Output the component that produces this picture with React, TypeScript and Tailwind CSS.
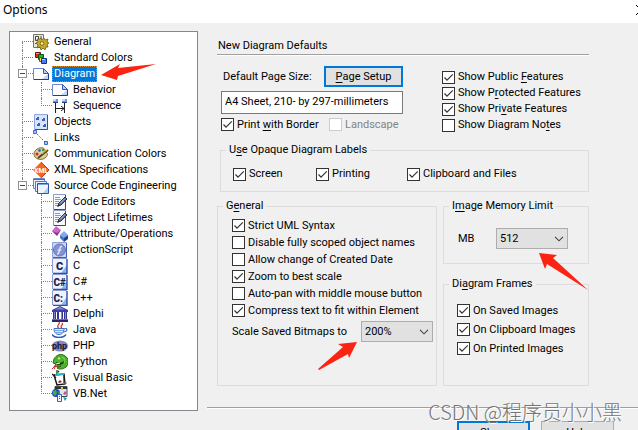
import React, { useId } from "react";

/* Renders a caption in which "&" marks the keyboard mnemonic. */
function Caption({ text }: { text: string }) {
  const at = text.indexOf("&");
  if (at < 0) return <>{text}</>;
  return (
    <>
      {text.slice(0, at)}
      <u className="underline decoration-1 underline-offset-2">{text[at + 1]}</u>
      {text.slice(at + 2)}
    </>
  );
}

type CheckProps = { label: string; checked?: boolean; disabled?: boolean; row?: string };

function Check({ label, checked, disabled, row = "h-4" }: CheckProps) {
  const id = useId();
  return (
    <div className={`flex items-center gap-[3px] ${row}`}>
      <span className="relative h-[13px] w-[13px] shrink-0">
        <input
          id={id}
          type="checkbox"
          defaultChecked={checked}
          disabled={disabled}
          className="peer block h-[13px] w-[13px] appearance-none border border-[#333] bg-white disabled:border-[#ccc]"
        />
        <svg
          viewBox="0 0 13 13"
          className="pointer-events-none absolute inset-0 hidden h-[13px] w-[13px] peer-checked:block"
        >
          <path d="M2.5 6.5 5 9.2 10.8 3.4" fill="none" stroke="#333" strokeWidth="1.2" />
        </svg>
      </span>
      <label htmlFor={id} className={`whitespace-nowrap ${disabled ? "text-[#838383]" : ""}`}>
        <Caption text={label} />
      </label>
    </div>
  );
}

function Group({ title, className, children }: { title: string; className: string; children: React.ReactNode }) {
  return (
    <fieldset className={`min-w-0 border border-[#dcdcdc] ${className}`}>
      <legend className="ml-[5px] h-[14px] px-[3px] leading-[14px]">
        <Caption text={title} />
      </legend>
      {children}
    </fieldset>
  );
}

function Dropdown({ id, value, options }: { id: string; value: string; options: string[] }) {
  return (
    <span className="relative h-[21px] w-[72px] shrink-0">
      <select
        id={id}
        defaultValue={value}
        className="block h-[21px] w-full appearance-none border border-[#adadad] bg-[#e1e1e1] pl-[3px]"
      >
        {options.map((o) => (
          <option key={o}>{o}</option>
        ))}
      </select>
      <svg viewBox="0 0 10 6" className="pointer-events-none absolute top-2 right-1 h-[6px] w-[10px]">
        <path d="M1 .8 5 4.8 9 .8" fill="none" stroke="#444" strokeWidth="1.1" />
      </svg>
    </span>
  );
}

/* ---- tree icons, 16 x 16 ---- */

const page = (
  <>
    <path d="M.5 2.5h10l5 5v6H.5z" fill="#fff" stroke="#7089d2" />
    <path d="M1 13.5h14.5V8" fill="none" stroke="#223a91" />
    <path d="M10.5 2.5v5h5z" fill="#bcd0fa" stroke="#3655b8" />
    <path d="M9 13h6V8z" fill="#c3d5fb" />
  </>
);

const editor = (
  <>
    <path d="M1.5.5h12v15h-12z" fill="#f7f9ff" stroke="#8b9ccc" />
    <path d="M13.5 1v14.5H2" fill="none" stroke="#32498f" />
    <path d="M3 3.5h5M3 5.5h6M3 7.5h4M3 9.5h4M3 11.5h3" stroke="#8c98b3" />
    <path d="m6 12 1-3 6-6 2 2-6 6z" fill="#566a8e" stroke="#111" strokeWidth=".8" />
    <path d="m8 9.5 5-5" stroke="#cfe0ff" strokeWidth=".8" />
    <path d="m5 13 2-1-1-1z" fill="#111" />
  </>
);

function langTile(mark: string) {
  return (
    <>
      <path d="M1 1h14v14H1z" fill="#eef3ff" />
      <path d="M9 15h6V7z" fill="#8fb4f3" />
      <path d="M.5 15V.5H15" fill="none" stroke="#8a9cd0" />
      <path d="M15 1v14.5H1" fill="none" stroke="#31519e" strokeWidth="1.4" />
      <text
        x={mark.length > 1 ? 1.5 : 4}
        y="12"
        fontSize={mark.length > 1 ? 10 : 11}
        fontWeight="900"
        fontFamily="Roboto, sans-serif"
        fill="#1b2350"
      >
        {mark}
      </text>
    </>
  );
}

const icons: Record<string, React.ReactNode> = {
  general: (
    <>
      <path d="M.5.5h10v13H.5z" fill="#e7e5da" stroke="#77766b" />
      <path d="M2.5 2.5h3v4h-3z" fill="#fff" stroke="#444" />
      <path d="M2 9.5h3M8 2v3" stroke="#55544a" />
      <path
        d="m8 4 1 2 2-2 1 2 3-1-1 3 2 1-2 1 1 3-2 0-1 3-2-2-2 2-1-3-3 1 1-3-2-2 2-1-1-3h3z"
        fill="#c6a82c"
        stroke="#6d5b10"
        strokeWidth=".8"
      />
      <circle cx="9" cy="9.5" r="1.8" fill="#fff6bb" stroke="#5b4a0b" strokeWidth=".8" />
    </>
  ),
  colors: (
    <>
      <path d="M2.5 2.5h5v5h-5z" fill="#e22a1c" stroke="#701008" />
      <path d="M5.5 4.5h5v5h-5z" fill="#25ad35" stroke="#0a5516" />
      <path d="M3 3h3v1H3z" fill="#ff927d" />
      <path d="M6.5 7.5h4v4h-4z" fill="#ffe032" stroke="#6b5900" />
      <path d="M8.5 8.5h5v5h-5z" fill="#4b7af0" stroke="#112f88" />
      <path d="M9 9h3v1H9z" fill="#b9d0ff" />
    </>
  ),
  page,
  sequence: (
    <>
      <path d="M1 1h5v4H1zM10 1h5v4h-5z" fill="#6d94e5" />
      <path d="M1 1h3v2H1zM10 1h3v2h-3z" fill="#c5d8ff" />
      <path d="M1 4.5h5M10 4.5h5" stroke="#22418c" />
      <path d="M3.5 5v10M12.5 5v10M4 10.5h8M9 8l3 2.5L9 13" fill="none" stroke="#222" />
    </>
  ),
  objects: (
    <>
      <path d="M1.5.5h13v15h-13z" fill="#d6e3ff" stroke="#90a7dc" />
      <path d="M14.5 1v14.5H2" fill="none" stroke="#2c4fa3" />
      <path d="M3 3h3v3H3zM9 4h3v3H9zM4 9h3v3H4zM10 10h3v3h-3z" fill="#3c60ba" />
      <path d="M3 3h1v1H3zM9 4h1v1H9zM4 9h1v1H4zM10 10h1v1h-1z" fill="#fff" />
    </>
  ),
  links: (
    <>
      <path d="M.5.5h3v3h-3zM11.5 11.5h3v3h-3z" fill="#a9c5ff" stroke="#4468bf" />
      <path d="m4 4 8 8" stroke="#333" strokeDasharray="1 1.5" />
    </>
  ),
  palette: (
    <>
      <path d="M1 8c0-4 5-7 9-6 3 1 1 3 3 4s2 4-1 6c-4 3-11 1-11-4z" fill="#dfcf93" stroke="#79683a" />
      <circle cx="4" cy="8" r="1.5" fill="#dc2518" />
      <circle cx="6.5" cy="4.5" r="1.3" fill="#2a54d1" />
      <circle cx="10" cy="4" r="1.2" fill="#25a538" />
      <circle cx="6" cy="11" r="1.3" fill="#f5f2e0" />
      <path d="m5 12 10-8" stroke="#50411f" strokeWidth="2" />
      <path d="m9 8 6-5" stroke="#efb62f" />
    </>
  ),
  xml: (
    <>
      <path d="m8 0 8 8-8 8-8-8z" fill="#f4661b" />
      <path d="m8 0 8 8-8 8" fill="none" stroke="#c83b08" />
      <text x="1" y="10.5" fontSize="7" fontWeight="700" fontFamily="Roboto, sans-serif" fill="#fff">
        XML
      </text>
    </>
  ),
  source: (
    <>
      <path d="M.5.5h11v10H.5z" fill="#e9f1ff" stroke="#6484ce" />
      <path d="M1 1h11v1H1z" fill="#4169c2" />
      <path d="M2.5 3.5h11v10h-11z" fill="#e9f1ff" stroke="#5277ca" />
      <path d="M4.5 5.5h11v10h-11z" fill="#eff5ff" stroke="#2f56ad" />
      <path d="M5 6h10v1H5z" fill="#7da3eb" />
      <path d="M10 15h5v-6z" fill="#b2cdfb" />
    </>
  ),
  editor,
  attributes: (
    <>
      <path d="m4 0 5 4-4 5-5-4z" fill="#cf65cf" />
      <path d="m0 5 5 2 4-3-4 6z" fill="#873487" />
      <path d="m12 5 4 4-4 4-4-4z" fill="#7daaf1" />
      <path d="M8 9l4 3v4l-4-4z" fill="#496fb7" />
      <path d="m12 12 4-3v4l-4 3z" fill="#243f82" />
    </>
  ),
  action: (
    <>
      <path d="M.5.5h14v15H.5z" fill="#c9d5f6" stroke="#8ea1d8" />
      <path d="M14.5 1v14.5H1" fill="none" stroke="#4461b4" />
      <circle cx="7.5" cy="8" r="6" fill="#8493d2" stroke="#6577bd" />
      <path d="M10 4.5c-2-.5-2 2-2.5 4S6.5 12 5 12M5.5 8h4" fill="none" stroke="#eef2ff" strokeWidth="1.2" />
    </>
  ),
  c: langTile("C"),
  csharp: langTile("C#"),
  cpp: langTile("C:"),
  delphi: (
    <>
      <path d="m8 0 8 4v2H0V4z" fill="#3d3fa6" />
      <path d="m8 1 5 2.5H3z" fill="#8286dc" />
      <path d="M1 6h3v7H1zM5 6h2v7H5zM9 6h2v7H9zM12 6h3v7h-3z" fill="#34368f" />
      <path d="M2 6h1v7H2zM9 6h1v7H9zM13 6h1v7h-1z" fill="#8185d5" />
      <path d="M0 13h16v3H0z" fill="#25266c" />
      <path d="M0 13.5h16" stroke="#656abf" />
    </>
  ),
  java: (
    <>
      <path d="M7 6C3 4 9 2 7 0M10 6c-3-2 2-3 0-5" fill="none" stroke="#e63522" strokeWidth="1.3" />
      <path d="M2 6.5h10c0 4-2 6-5 6s-5-2-5-6z" fill="#dbe9ff" stroke="#3c72c4" />
      <path d="M12 7c4-2 4 3-1 3" fill="none" stroke="#3c72c4" strokeWidth="1.2" />
      <path d="M3 8.5h8M4 10.5h6" stroke="#77a4e3" />
      <path d="M0 12.5c3 4 11 4 14 0" fill="none" stroke="#245fae" strokeWidth="1.5" />
    </>
  ),
  php: (
    <>
      <ellipse cx="8" cy="8" rx="8" ry="5.5" fill="#8587bd" />
      <text x="0" y="10.5" fontSize="9" fontWeight="700" fontFamily="Roboto, sans-serif" fill="#191933">
        php
      </text>
    </>
  ),
  python: (
    <>
      <path d="M2 5c2-4 7-6 11-3 4 2 4 8 1 11-3 2-6 3-9 1l4-2-7 1 2-3-3-1z" fill="#4cb32c" stroke="#286717" />
      <path d="M4 8c4 2 7 0 9-2-1 5-5 5-9 5z" fill="#173a0e" />
      <path d="m4 10 4-1" stroke="#fff" />
      <circle cx="7" cy="4.5" r="1" fill="#fffa98" />
      <path d="m0 15 2-2 4-1M1 13l2 2" fill="none" stroke="#e02a1a" />
      <path d="M10 3c3 1 3 4 2 6" fill="none" stroke="#8de35b" />
    </>
  ),
  vb: (
    <>
      <path d="m2 5 10-1 1 10-8 1z" fill="#fff" stroke="#111" strokeWidth="1.4" />
      <path d="m3 5 9-1" stroke="#20bcc5" strokeWidth="2" />
      <path d="m0 4 4 4M5 0v3l2-2M12 5v8" fill="none" stroke="#222" strokeWidth="1.2" />
      <path d="M4 1h2v2H4z" fill="#2ea337" />
      <path d="m6 12 2-2 2 2-3 1z" fill="#942e24" />
      <path d="M12 13h3" stroke="#777" />
    </>
  ),
  vbnet: (
    <>
      <path d="M3 .5h12v10H3z" fill="#dde5ee" stroke="#41484e" />
      <path d="M3 1h12v2H3z" fill="#333" />
      <path d="M9 1h2v3H9z" fill="#eacb34" />
      <circle cx="4" cy="7" r="4" fill="#2346bd" />
      <path d="m1 5 3-1 1 3-2 3-2-2zM6 5l2 1-1 3z" fill="#37b445" />
      <path d="M5.5 8.5h4v7h-4z" fill="#f2f6ff" stroke="#3c5caa" />
      <path d="M7 10.5h1M7 12.5h1" stroke="#3c5caa" />
      <path d="m11 8 2-3 2 2-2 2z" fill="#c453b0" />
      <path d="m11 11 4 1-2 3z" fill="#18a0a4" />
    </>
  ),
};

type Node = { label: string; icon: string; selected?: boolean; children?: Node[] };

const tree: Node[] = [
  { label: "General", icon: "general" },
  { label: "Standard Colors", icon: "colors" },
  {
    label: "Diagram",
    icon: "page",
    selected: true,
    children: [
      { label: "Behavior", icon: "page" },
      { label: "Sequence", icon: "sequence" },
    ],
  },
  { label: "Objects", icon: "objects" },
  { label: "Links", icon: "links" },
  { label: "Communication Colors", icon: "palette" },
  { label: "XML Specifications", icon: "xml" },
  {
    label: "Source Code Engineering",
    icon: "source",
    children: [
      { label: "Code Editors", icon: "editor" },
      { label: "Object Lifetimes", icon: "editor" },
      { label: "Attribute/Operations", icon: "attributes" },
      { label: "ActionScript", icon: "action" },
      { label: "C", icon: "c" },
      { label: "C#", icon: "csharp" },
      { label: "C++", icon: "cpp" },
      { label: "Delphi", icon: "delphi" },
      { label: "Java", icon: "java" },
      { label: "PHP", icon: "php" },
      { label: "Python", icon: "python" },
      { label: "Visual Basic", icon: "vb" },
      { label: "VB.Net", icon: "vbnet" },
    ],
  },
];

function Branch({ nodes, root }: { nodes: Node[]; root?: boolean }) {
  return (
    <ul role={root ? "tree" : "group"} aria-label={root ? "Option pages" : undefined}>
      {nodes.map((n, i) => {
        const first = root && i === 0;
        const last = i === nodes.length - 1;
        return (
          <li key={n.label} role="treeitem" aria-selected={!!n.selected}>
            <div className="flex h-4 items-center">
              <span className="relative flex h-4 w-[11px] shrink-0 flex-col">
                <span className={`h-2 border-b border-dotted border-[#808080] ${first ? "" : "border-l"}`} />
                <span className={`h-2 border-dotted border-[#808080] ${last ? "" : "border-l"}`} />
                {n.children && (
                  <button
                    aria-label={`Collapse ${n.label}`}
                    className="absolute top-[3px] -left-1 flex h-[9px] w-[9px] items-center justify-center border border-[#919191] bg-white"
                  >
                    <span className="h-px w-[5px] bg-[#31479c]" />
                  </button>
                )}
              </span>
              <svg viewBox="0 0 16 16" className="h-4 w-4 shrink-0" aria-hidden="true">
                {icons[n.icon]}
              </svg>
              <span
                className={`ml-[3px] h-4 px-[2px] whitespace-nowrap ${
                  n.selected ? "bg-[#0078d7] text-white outline-1 -outline-offset-1 outline-dotted outline-[#e08a30]" : ""
                }`}
              >
                {n.label}
              </span>
            </div>
            {n.children && (
              <div className={`pl-[18px] ${last ? "ml-px" : "border-l border-dotted border-[#808080]"}`}>
                <Branch nodes={n.children} />
              </div>
            )}
          </li>
        );
      })}
    </ul>
  );
}

export default function App() {
  return (
    <div className="relative flex h-screen flex-col overflow-hidden bg-[#f0f0f0] font-[Roboto,'Liberation_Sans',sans-serif] text-[11px] leading-4 text-black">
      <header className="flex h-[23px] shrink-0 justify-between bg-white pl-[3px]">
        <h1 className="font-['Noto_Sans',sans-serif] text-[12px] leading-5">Options</h1>
        <button aria-label="Close window" className="-mr-2 w-[10px] shrink-0">
          <svg viewBox="0 0 10 10" className="-mt-1 h-[10px] w-[10px]">
            <path d="m0 0 10 10M10 0 0 10" stroke="#000" />
          </svg>
        </button>
      </header>

      <main className="flex items-start">
        <nav className="mt-2 ml-[9px] w-[189px] shrink-0 border border-[#828790] bg-white pt-[2px] pb-2 pl-3">
          <Branch nodes={tree} root />
        </nav>

        <section className="ml-[9px] min-w-0 flex-1">
          <div className="pt-[14px] pr-[49px] pl-[10px]">
            <h2 className="h-[18px] border-b border-[#a0a0a0] pl-px leading-[18px] shadow-[0_1px_0_#fff]">
              New Diagram Defaults
            </h2>

            <div className="mt-[11px] flex justify-between pl-1">
              <div className="flex w-[182px] flex-col gap-1">
                <div className="flex h-[21px] items-center justify-between pl-[2px]">
                  <label htmlFor="page-size">Default Page Size:</label>
                  <button className="h-[21px] w-[79px] border-2 border-[#0078d7] bg-[#e1e1e1] leading-4">
                    <Caption text="&Page Setup" />
                  </button>
                </div>
                <input
                  id="page-size"
                  type="text"
                  readOnly
                  defaultValue="A4 Sheet, 210- by 297-millimeters"
                  className="h-[23px] w-full border border-[#7a7a7a] bg-white px-[3px] pb-[3px]"
                />
                <div className="flex">
                  <div className="w-[108px]">
                    <Check label="Print &with Border" checked row="h-[13px]" />
                  </div>
                  <Check label="Landscape" disabled row="h-[13px]" />
                </div>
              </div>
              <div className="w-[147px] pt-[3px]">
                <Check label="Show Public &Features" checked />
                <Check label="Show P&rotected Features" checked />
                <Check label="Show Pri&vate Features" checked />
                <Check label="Show Diagram No&tes" />
              </div>
            </div>

            <Group title="U&se Opaque Diagram Labels" className="mt-[10px] ml-[3px] pb-[9px]">
              <div className="grid grid-cols-[83px_91px_auto] pt-[9px] pl-3">
                <Check label="Screen" checked />
                <Check label="Printing" checked />
                <Check label="Clipboard and Files" checked />
              </div>
            </Group>

            <div className="mt-[7px] grid grid-cols-[220fr_146fr] gap-[6px]">
              <Group title="G&eneral" className="pb-[43px]">
                <div className="pt-1 pl-[14px]">
                  <Check row="h-[17px]" label="Strict UML Syntax" checked />
                  <Check row="h-[17px]" label="Disable fully scoped object names" />
                  <Check row="h-[17px]" label="Allow change of Created Date" />
                  <Check row="h-[17px]" label="Zoom to best scale" checked />
                  <Check row="h-[17px]" label="Auto-pan with middle mouse button" />
                  <Check row="h-[17px]" label="Compress text to fit within Element" checked />
                  <div className="mt-[2px] flex h-[21px] items-center justify-between pr-[3px]">
                    <label htmlFor="scale">Scale Saved Bitmaps to</label>
                    <Dropdown id="scale" value="200%" options={["100%", "150%", "200%"]} />
                  </div>
                </div>
              </Group>

              <div className="flex flex-col gap-[13px]">
                <Group title="I&mage Memory Limit" className="pb-[14px]">
                  <div className="flex items-center justify-between pt-[15px] pr-5 pl-[14px]">
                    <label htmlFor="memory">MB</label>
                    <Dropdown id="memory" value="512" options={["128", "256", "512"]} />
                  </div>
                </Group>
                <Group title="Di&agram Frames" className="flex-1">
                  <div className="pt-[10px] pl-[13px]">
                    <Check row="h-[19px]" label="On Saved Images" checked />
                    <Check row="h-[19px]" label="On Clipboard Images" checked />
                    <Check row="h-[19px]" label="On Printed Images" checked />
                  </div>
                </Group>
              </div>
            </div>
          </div>

          <footer className="mt-[21px] flex justify-end gap-[11px] border-t border-[#a0a0a0] pt-[13px] pr-6 shadow-[inset_0_1px_0_#fff]">
            <button className="h-[23px] w-[73px] border-2 border-[#0078d7] bg-[#e1e1e1]">Close</button>
            <button className="h-[23px] w-[73px] border border-[#adadad] bg-[#e1e1e1]">Help</button>
          </footer>
        </section>
      </main>

      {/* annotation arrows and author mark drawn over the dialog */}
      <svg viewBox="0 0 638 430" className="pointer-events-none absolute top-0 left-0 h-[430px] w-[638px]" aria-hidden="true">
        <g fill="#fb2412">
          <path d="M101 75 120 64 118 68 156 64 118 76 117 80z" />
          <path d="M539 253 557 255 553 258 588 290 547 264 545 269z" />
          <path d="M357 342 338 344 343 347 318 369 319 370 348 354 349 358z" />
        </g>
      </svg>
      <p className="pointer-events-none absolute right-4 bottom-[6px] font-['Noto_Sans_CJK_SC',sans-serif] text-[20px] leading-6 font-light whitespace-nowrap text-[#757575] [text-shadow:1px_1px_0_#fff]">
        CSDN @程序员小小黑
      </p>
    </div>
  );
}
